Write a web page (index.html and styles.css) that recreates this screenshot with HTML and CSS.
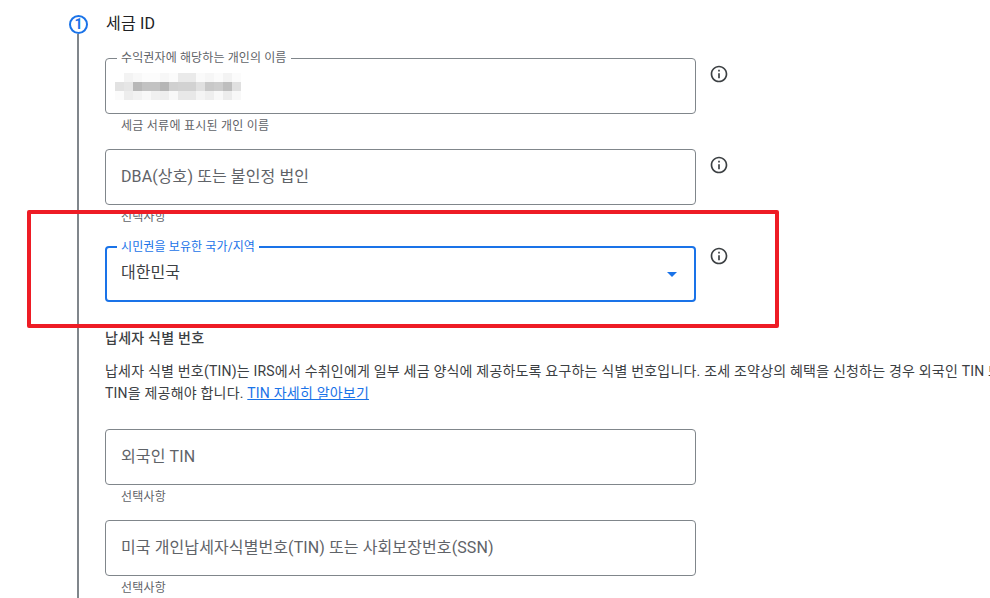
FILE: index.html
```html
<!DOCTYPE html>
<html lang="ko">
<head>
    <meta charset="UTF-8">
    <meta name="viewport" content="width=device-width, initial-scale=1.0">
    <title>세금 ID</title>
    <link rel="stylesheet" href="styles.css">
</head>
<body>
    <div class="stepper">
        <div class="rail">
            <div class="step-circle">1</div>
            <div class="step-line"></div>
        </div>
        <div class="content">
            <h2 class="step-title">세금 ID</h2>

            <div class="row row-first">
                <div class="field-wrap">
                    <div class="field">
                        <span class="float-label">수익권자에 해당하는 개인의 이름</span>
                        <svg class="blur-name" width="126" height="27" viewBox="0 0 14 3" shape-rendering="crispEdges">
                            <rect x="1" y="0" width="1" height="1" fill="#f3f3f3"/>
                            <rect x="2" y="0" width="1" height="1" fill="#f8f8f8"/>
                            <rect x="3" y="0" width="2" height="1" fill="#fcfcfc"/>
                            <rect x="5" y="0" width="1" height="1" fill="#f7f7f7"/>
                            <rect x="6" y="0" width="1" height="1" fill="#fbfbfb"/>
                            <rect x="7" y="0" width="2" height="1" fill="#eaeaea"/>
                            <rect x="9" y="0" width="1" height="1" fill="#fafafa"/>
                            <rect x="10" y="0" width="1" height="1" fill="#f6f6f6"/>
                            <rect x="11" y="0" width="1" height="1" fill="#fbfbfb"/>
                            <rect x="12" y="0" width="1" height="1" fill="#f3f3f3"/>
                            <rect x="13" y="0" width="1" height="1" fill="#fbfbfb"/>
                            <rect x="0" y="1" width="1" height="1" fill="#e2e2e2"/>
                            <rect x="1" y="1" width="1" height="1" fill="#e6e6e6"/>
                            <rect x="2" y="1" width="1" height="1" fill="#b8b8b8"/>
                            <rect x="3" y="1" width="2" height="1" fill="#c2c2c2"/>
                            <rect x="5" y="1" width="1" height="1" fill="#b6b6b6"/>
                            <rect x="6" y="1" width="1" height="1" fill="#d0d0d0"/>
                            <rect x="7" y="1" width="2" height="1" fill="#d2d2d2"/>
                            <rect x="9" y="1" width="1" height="1" fill="#e0e0e0"/>
                            <rect x="10" y="1" width="1" height="1" fill="#c8c8c8"/>
                            <rect x="11" y="1" width="1" height="1" fill="#cccccc"/>
                            <rect x="12" y="1" width="1" height="1" fill="#bebebe"/>
                            <rect x="13" y="1" width="1" height="1" fill="#e0e0e0"/>
                            <rect x="0" y="2" width="1" height="1" fill="#fbfbfb"/>
                            <rect x="1" y="2" width="1" height="1" fill="#ededed"/>
                            <rect x="2" y="2" width="1" height="1" fill="#f2f2f2"/>
                            <rect x="3" y="2" width="1" height="1" fill="#f8f8f8"/>
                            <rect x="4" y="2" width="1" height="1" fill="#f0f0f0"/>
                            <rect x="5" y="2" width="1" height="1" fill="#eeeeee"/>
                            <rect x="6" y="2" width="1" height="1" fill="#f8f8f8"/>
                            <rect x="7" y="2" width="2" height="1" fill="#e8e8e8"/>
                            <rect x="9" y="2" width="1" height="1" fill="#f4f4f4"/>
                            <rect x="10" y="2" width="1" height="1" fill="#eeeeee"/>
                            <rect x="11" y="2" width="1" height="1" fill="#f8f8f8"/>
                            <rect x="12" y="2" width="1" height="1" fill="#ececec"/>
                            <rect x="13" y="2" width="1" height="1" fill="#f8f8f8"/>
                        </svg>
                    </div>
                    <div class="helper">세금 서류에 표시된 개인 이름</div>
                </div>
                <svg class="info-icon" viewBox="0 0 24 24"><path d="M11 7h2v2h-2zm0 4h2v6h-2zm1-9C6.48 2 2 6.48 2 12s4.48 10 10 10 10-4.48 10-10S17.52 2 12 2zm0 18c-4.41 0-8-3.59-8-8s3.59-8 8-8 8 3.59 8 8-3.59 8-8 8z"/></svg>
            </div>

            <div class="row">
                <div class="field-wrap">
                    <div class="field"><span class="placeholder">DBA(상호) 또는 불인정 법인</span></div>
                    <div class="helper">선택사항</div>
                </div>
                <svg class="info-icon" viewBox="0 0 24 24"><path d="M11 7h2v2h-2zm0 4h2v6h-2zm1-9C6.48 2 2 6.48 2 12s4.48 10 10 10 10-4.48 10-10S17.52 2 12 2zm0 18c-4.41 0-8-3.59-8-8s3.59-8 8-8 8 3.59 8 8-3.59 8-8 8z"/></svg>
            </div>

            <div class="row row-select">
                <div class="field-wrap">
                    <div class="field field-focus">
                        <span class="float-label float-label-focus">시민권을 보유한 국가/지역</span>
                        <span class="value">대한민국</span>
                        <span class="arrow"></span>
                    </div>
                </div>
                <svg class="info-icon info-icon-select" viewBox="0 0 24 24"><path d="M11 7h2v2h-2zm0 4h2v6h-2zm1-9C6.48 2 2 6.48 2 12s4.48 10 10 10 10-4.48 10-10S17.52 2 12 2zm0 18c-4.41 0-8-3.59-8-8s3.59-8 8-8 8 3.59 8 8-3.59 8-8 8z"/></svg>
            </div>

            <h3 class="section-title">납세자 식별 번호</h3>
            <p class="section-text">납세자 식별 번호(TIN)는 IRS에서 수취인에게 일부 세금 양식에 제공하도록 요구하는 식별 번호입니다. 조세 조약상의 혜택을 신청하는 경우 외국인 TIN 또는 미국<br>TIN을 제공해야 합니다. <a href="#">TIN 자세히 알아보기</a></p>

            <div class="row row-tin">
                <div class="field-wrap">
                    <div class="field"><span class="placeholder">외국인 TIN</span></div>
                    <div class="helper">선택사항</div>
                </div>
            </div>

            <div class="row">
                <div class="field-wrap">
                    <div class="field"><span class="placeholder">미국 개인납세자식별번호(TIN) 또는 사회보장번호(SSN)</span></div>
                    <div class="helper">선택사항</div>
                </div>
            </div>
        </div>
    </div>

    <div class="highlight-box"></div>
</body>
</html>
```

FILE: styles.css
```css
html, body {
    margin: 0;
    height: 598px;
    overflow: hidden;
    background: white;
}
body {
    font-family: Roboto, "Noto Sans CJK KR", sans-serif;
    color: #3c4043;
}
.stepper {
    display: flex;
    height: 598px;
    box-sizing: border-box;
    padding: 14px 0 0 69px;
    overflow: hidden;
}
.rail {
    width: 19px;
    display: flex;
    flex-direction: column;
    align-items: center;
}
.step-circle {
    width: 19px;
    height: 19px;
    margin-top: 1px;
    box-sizing: border-box;
    border: 2px solid #1a73e8;
    border-radius: 50%;
    color: #1a73e8;
    font-size: 14px;
    font-weight: 700;
    line-height: 15px;
    text-align: center;
}
.step-line {
    flex: 1;
    width: 2px;
    margin-right: 1px;
    background: #80868b;
}
.content {
    margin-left: 17px;
    flex-shrink: 0;
}
.step-title {
    margin: 0;
    padding-left: 1px;
    font-size: 16px;
    font-weight: 400;
    line-height: 20px;
    letter-spacing: .2px;
    color: #202124;
}
.row {
    display: flex;
    align-items: flex-start;
    margin-bottom: 15px;
}
.row-first {
    margin-top: 24px;
}
.row-select {
    margin-top: 21px;
    margin-bottom: 0;
}
.row-tin {
    margin-top: 25px;
}
.field-wrap {
    width: 591px;
    flex-shrink: 0;
}
.field {
    position: relative;
    height: 56px;
    box-sizing: border-box;
    border: 1px solid #80868b;
    border-radius: 4px;
    padding: 0 15px;
    display: flex;
    align-items: center;
    font-size: 16px;
    letter-spacing: .1px;
}
.field-focus {
    border: 2px solid #1a73e8;
    padding: 0 14px;
}
.float-label {
    position: absolute;
    top: -8px;
    left: 11px;
    padding: 0 4px;
    background: white;
    font-size: 12px;
    line-height: 14px;
    letter-spacing: .12px;
    color: #5f6368;
}
.float-label-focus {
    left: 10px;
    color: #1a73e8;
}
.blur-name {
    margin: 0 0 0 -6px;
}
.placeholder {
    margin-bottom: 4px;
    color: #5f6368;
}
.value {
    margin-bottom: 6px;
    color: #3c4043;
    letter-spacing: 0;
}
.arrow {
    margin: 1px 3px 0 auto;
    border-left: 5px solid transparent;
    border-right: 5px solid transparent;
    border-top: 5px solid #1a73e8;
}
.helper {
    padding: 4px 0 0 16px;
    font-size: 12px;
    line-height: 16px;
    letter-spacing: .25px;
    color: #5f6368;
}
.info-icon {
    width: 20px;
    height: 20px;
    margin: 6px 0 0 13px;
    fill: #3c4043;
    flex-shrink: 0;
}
.info-icon-select {
    margin-top: 0;
}
.section-title {
    margin: 26px 0 0;
    font-size: 14px;
    font-weight: 500;
    line-height: 20px;
    letter-spacing: .25px;
    color: #3c4043;
}
.section-text {
    margin: 12px 0 0;
    font-size: 14px;
    line-height: 22px;
    letter-spacing: .2px;
    white-space: nowrap;
    color: #3c4043;
}
.section-text a {
    color: #1a73e8;
}
.highlight-box {
    position: absolute;
    left: 27px;
    top: 210px;
    width: 752px;
    height: 118px;
    box-sizing: border-box;
    border: 4px solid #ee1c25;
    border-radius: 2px;
}
```
